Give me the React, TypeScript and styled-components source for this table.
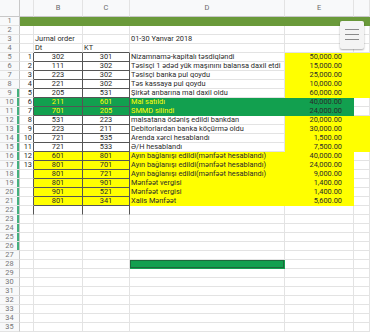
import React from 'react';
import styled, { createGlobalStyle } from 'styled-components';

const GlobalStyle = createGlobalStyle`
  html, body { margin: 0; padding: 0; background: #fff; }
  body { font-family: Roboto, "Liberation Sans", Arial, sans-serif; overflow: hidden; }
`;

const YELLOW = '#ffff00';
const GREEN = '#12a04f';
const OLIVE = '#6a9a3a';
const DARK = '#555555';
const GRID = '#e3e3e3';
const HEAD_LINE = '#c8c8c8';

const Frame = styled.div`
    position: relative;
    width: 370px;
    height: 332px;
    overflow: hidden;
`

const Sheet = styled.div`
    display: grid;
    grid-template-columns: 20px 14px 49px 47px 155px 69px 1fr;
    grid-template-rows: 17px;
    grid-auto-rows: 9px;
    font-size: 7.4px;
    color: #2a2a2a;
`

const Corner = styled.div`
    box-sizing: border-box;
    background: #f8f9fa;
    border-right: 1px solid ${HEAD_LINE};
    border-bottom: 1px solid ${HEAD_LINE};
`

const ColumnHead = styled.div`
    box-sizing: border-box;
    background: #f8f9fa;
    color: #6b6b6b;
    text-align: center;
    line-height: 16px;
    border-right: 1px solid ${GRID};
    border-bottom: 1px solid ${HEAD_LINE};
`

const RowHead = styled.div<{ $marked?: boolean }>`
    box-sizing: border-box;
    background: #f8f9fa;
    color: #777;
    text-align: center;
    line-height: 8px;
    border-right: 1px solid ${HEAD_LINE};
    border-bottom: 1px solid ${GRID};
    box-shadow: ${p => p.$marked ? 'inset -2px 0 0 #45b07e' : 'none'};
`

const Cell = styled.div<{
    $bg?: string; $fg?: string; $align?: string;
    $rb?: boolean; $bb?: boolean; $framed?: boolean; $padRight?: number
}>`
    box-sizing: border-box;
    background: ${p => p.$bg || '#fff'};
    color: ${p => p.$fg || '#2a2a2a'};
    text-align: ${p => p.$align || 'left'};
    border-right: 1px solid ${p => p.$rb ? DARK : p.$bg || GRID};
    border-bottom: 1px solid ${p => p.$bb ? DARK : p.$bg || GRID};
    box-shadow: ${p => p.$framed ? 'inset 0 0 0 1px #1d6a3b' : 'none'};
    padding: 0 ${p => p.$padRight ?? 1}px 0 1px;
    line-height: 8px;
    white-space: nowrap;
`

const MenuButton = styled.div`
    position: absolute;
    left: 340px;
    top: 21px;
    width: 24px;
    height: 28px;
    box-sizing: border-box;
    padding-top: 8px;
    background: #f4f4f4;
    border-radius: 2px;
    box-shadow: 0 1px 2px rgba(0, 0, 0, 0.35);
    display: flex;
    flex-direction: column;
    align-items: center;
    gap: 4px;
`

const MenuLine = styled.div`
    width: 14px;
    height: 1px;
    background: #8a8a8a;
`

type Spec = {
    text?: string; bg?: string; fg?: string; align?: string;
    rb?: boolean; bb?: boolean; framed?: boolean; padRight?: number
}

const entries: [string, string, string, string, string, 'e' | 'g' | 'y'][] = [
    ['1', '302', '301', 'Nizamnamə-kapitalı təsdiqləndi', '50,000.00', 'e'],
    ['2', '111', '302', 'Təsisçi 1 ədəd yük maşınını balansa daxil etdi', '15,000.00', 'e'],
    ['3', '223', '302', 'Təsisçi banka pul qoydu', '25,000.00', 'e'],
    ['4', '221', '302', 'Təs kassaya pul qoydu', '10,000.00', 'e'],
    ['5', '205', '531', 'Şirkət anbarına mal daxil oldu', '60,000.00', 'e'],
    ['6', '211', '601', 'Mal satıldı', '40,000.00', 'g'],
    ['7', '701', '205', 'SMMD silindi', '24,000.00', 'g'],
    ['8', '531', '223', 'malsatana ödəniş  edildi bankdan', '20,000.00', 'e'],
    ['9', '223', '211', 'Debitorlardan banka köçürmə oldu', '30,000.00', 'e'],
    ['10', '721', '535', 'Arenda xərci hesablandı', '1,500.00', 'e'],
    ['11', '721', '533', 'Ə/H hesablandı', '7,500.00', 'e'],
    ['12', '601', '801', 'Ayın bağlanışı edildi(mənfəət hesablandı)', '40,000.00', 'y'],
    ['13', '801', '701', 'Ayın bağlanışı edildi(mənfəət hesablandı)', '24,000.00', 'y'],
    ['', '801', '721', 'Ayın bağlanışı edildi(mənfəət hesablandı)', '9,000.00', 'y'],
    ['', '801', '901', 'Mənfəət vergisi', '1,400.00', 'y'],
    ['', '901', '521', 'Mənfəət vergisi', '1,400.00', 'y'],
    ['', '801', '341', 'Xalis Mənfəət', '5,600.00', 'y'],
];

function buildRow(r: number): Spec[] {
    const cells: Spec[] = [{}, {}, {}, {}, {}, {}];
    if (r === 1) return cells.map(() => ({ bg: OLIVE }));
    if (r === 3) {
        cells[1] = { text: 'Jurnal order' };
        cells[3] = { text: '01-30 Yanvar 2018' };
    }
    if (r === 4) {
        cells[1] = { text: 'Dt', bb: true };
        cells[2] = { text: 'KT', bb: true };
    }
    if (r >= 5 && r <= 21) {
        const [a, b, c, d, e, fill] = entries[r - 5];
        const bg = fill === 'g' ? GREEN : fill === 'y' ? YELLOW : undefined;
        const fg = fill === 'g' ? YELLOW : undefined;
        cells[0] = { text: a, align: 'right', rb: true };
        cells[1] = { text: b, align: 'center', rb: true, bb: true, bg, fg };
        cells[2] = { text: c, align: 'center', rb: true, bb: true, bg, fg };
        cells[3] = { text: d, bg, fg };
        cells[4] = { text: e, align: 'right', padRight: 11, bg: bg || YELLOW };
        cells[5] = { bg: fill === 'e' ? YELLOW : undefined };
    }
    if (r === 22) {
        cells[0] = { rb: true };
        cells[1] = { rb: true };
        cells[2] = { rb: true };
    }
    if (r === 28) cells[3] = { bg: GREEN, framed: true };
    return cells;
}

const rows = Array.from({ length: 35 }, (_, i) => i + 1);

export default function App() {
    return (
        <Frame>
            <GlobalStyle />
            <Sheet>
                <Corner />
                {['', 'B', 'C', 'D', 'E', ''].map((letter, i) => (
                    <ColumnHead key={'h' + i}>{letter}</ColumnHead>
                ))}
                {rows.map(r => (
                    <React.Fragment key={r}>
                        <RowHead $marked={r >= 9 && r <= 26}>{r}</RowHead>
                        {buildRow(r).map((c, i) => (
                            <Cell
                                key={i}
                                $bg={c.bg}
                                $fg={c.fg}
                                $align={c.align}
                                $rb={c.rb}
                                $bb={c.bb}
                                $framed={c.framed}
                                $padRight={c.padRight}
                            >
                                {c.text}
                            </Cell>
                        ))}
                    </React.Fragment>
                ))}
            </Sheet>
            <MenuButton>
                <MenuLine />
                <MenuLine />
                <MenuLine />
            </MenuButton>
        </Frame>
    );
}
